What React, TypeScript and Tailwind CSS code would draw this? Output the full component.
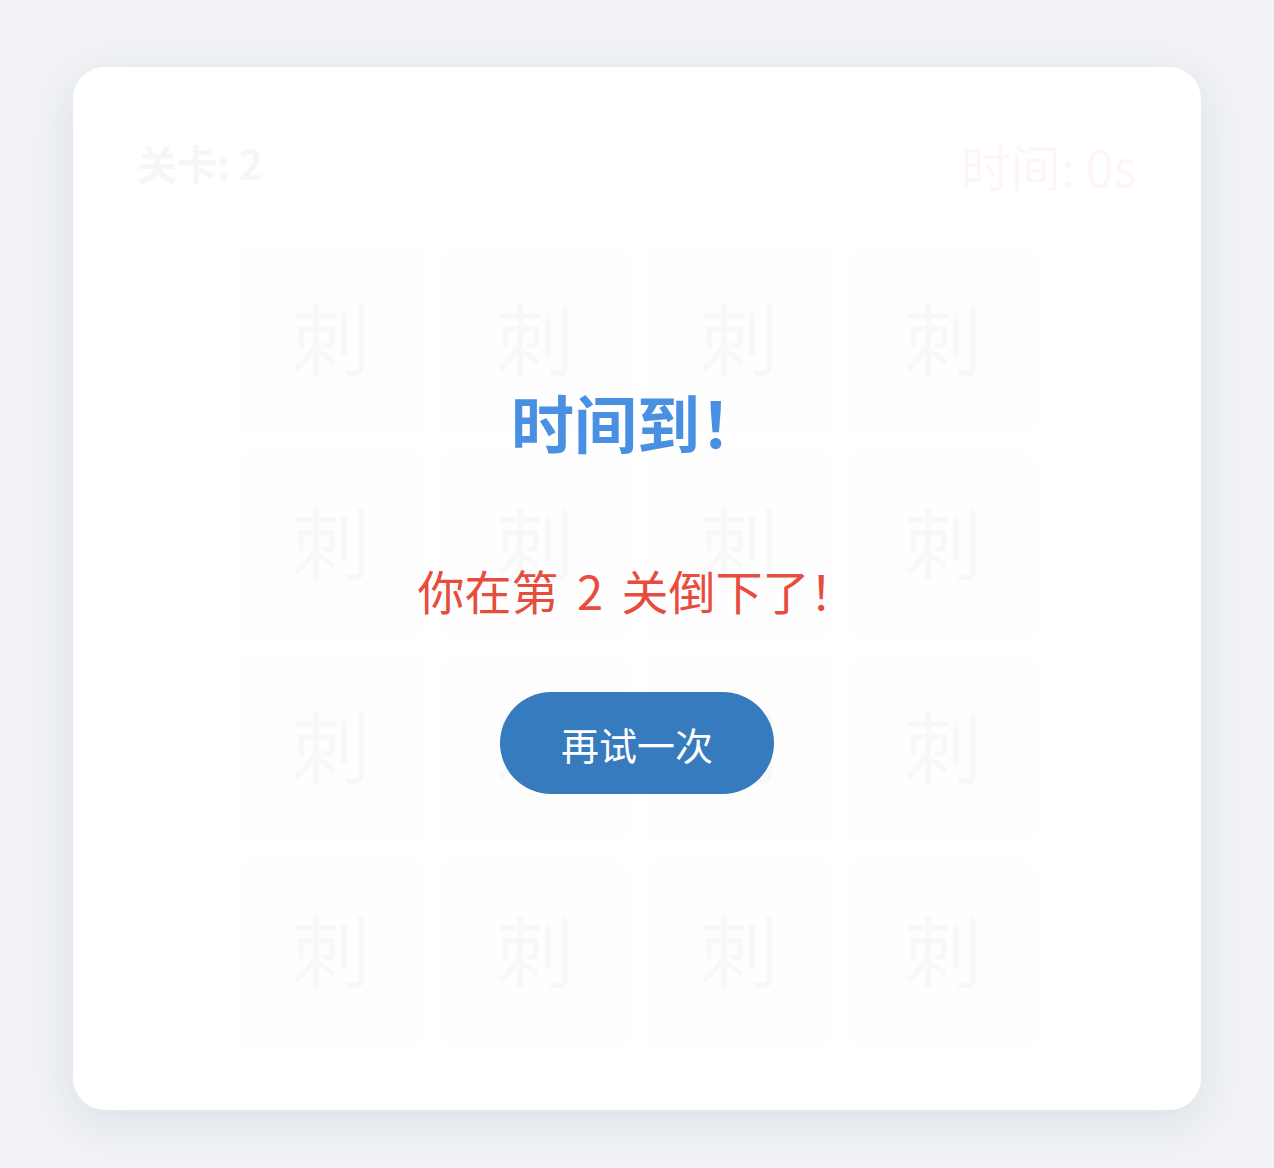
import React from "react";

const FONT = '"Noto Sans CJK SC", "Noto Sans", sans-serif';

export default function App() {
  const cells = Array.from({ length: 16 });
  return (
    <div
      className="min-h-screen w-full bg-[#f0f2f5] flex justify-center pt-[67px] pb-[58px]"
      style={{ fontFamily: FONT }}
    >
      <div className="relative w-[1128px] rounded-[32px] bg-white p-[64px] shadow-[0_12px_44px_rgba(30,50,80,0.09)]">
        <div className="flex h-[68px] items-center justify-between mb-[49px]">
          <div className="text-[40px] font-bold text-[#f1f1f1] leading-none pb-[4px]">关卡: 2</div>
          <div className="text-[50px] text-[#fdf1f0] leading-none">时间: 0s</div>
        </div>
        <div className="mx-auto grid w-[798px] grid-cols-4 gap-[18px]">
          {cells.map((_, i) => (
            <div
              key={i}
              className="flex h-[186px] items-center justify-center rounded-xl border border-[#fcfcfc] bg-[#fefefe] pb-[10px]"
            >
              <span className="text-[78px] leading-none text-[#f3f3f3]">刺</span>
            </div>
          ))}
        </div>

        <div className="absolute inset-0 flex flex-col items-center justify-center rounded-[32px] bg-white/40">
          <div className="text-[63px] font-bold leading-[76px] text-[#4a90e2] mb-[103px]">
            时间到！
          </div>
          <div className="text-[47px] leading-[56px] text-[#e74c3c] mb-[74px] whitespace-pre">
            你在第 <span className="px-[8px]">2</span> 关倒下了！
          </div>
          <button className="flex h-[102px] w-[274px] items-center justify-center rounded-full bg-[#367bbd] text-[38px] text-white">
            再试一次
          </button>
        </div>
      </div>
    </div>
  );
}
